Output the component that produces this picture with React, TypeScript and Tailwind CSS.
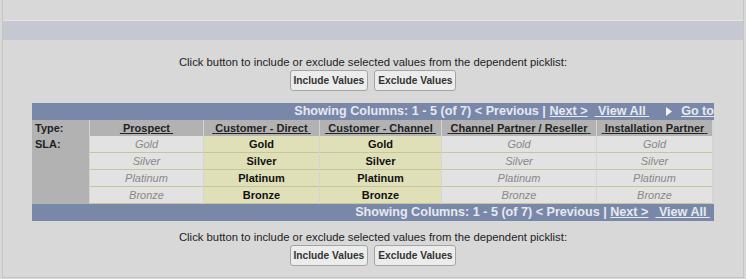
const COLUMNS = [
  { name: "Prospect", on: false },
  { name: "Customer - Direct", on: true },
  { name: "Customer - Channel", on: true },
  { name: "Channel Partner / Reseller", on: false },
  { name: "Installation Partner", on: false },
];
const VALUES = ["Gold", "Silver", "Platinum", "Bronze"];

function Buttons() {
  return (
    <div className="flex flex-col items-center">
      <p className="text-[11.3px] leading-[13px] text-[#222]">
        Click button to include or exclude selected values from the dependent picklist:
      </p>
      <div className="mt-[1px] flex gap-[6px]">
        <button className="h-[21px] rounded-[3px] border border-[#a4a4a4] bg-[#ececec] px-[3px] text-[10.2px] font-bold text-[#333]">
          Include Values
        </button>
        <button className="h-[21px] rounded-[3px] border border-[#a4a4a4] bg-[#ececec] px-[3px] text-[10.2px] font-bold text-[#333]">
          Exclude Values
        </button>
      </div>
    </div>
  );
}

function Pager({ goTo }: { goTo?: boolean }) {
  return (
    <div className="flex h-[17px] items-center justify-end whitespace-pre bg-[#7988a8] text-[12.6px] font-bold text-[#e6e9f0]">
      <span>Showing Columns: 1 - 5 (of 7) &lt; Previous | </span>
      <span className="underline">Next &gt;</span>
      <span>  </span>
      <span className="underline"> View All </span>
      {goTo ? (
        <>
          <span className="w-[17px]" />
          <svg width="6" height="9" viewBox="0 0 6 9" className="mr-[9px]">
            <path d="M0 0 L6 4.5 L0 9 Z" fill="#f4f4f4" />
          </svg>
          <span className="underline">Go to</span>
        </>
      ) : (
        <span className="w-[4px]" />
      )}
    </div>
  );
}

export default function App() {
  return (
    <div
      className="h-[279px] w-[746px] bg-[#d8d8d8]"
      style={{ fontFamily: '"Liberation Sans", Arial, sans-serif' }}
    >
      <div className="ml-[2px] mr-[2px] flex h-[278px] flex-col border-x border-b border-[#c4c4c4]">
        <div className="mt-[20px] h-px bg-[#e4e4e4]" />
        <div className="h-[19px] bg-[#c5c8d0]" />

        <div className="mt-[16px]">
          <Buttons />
        </div>

        <div className="mx-[29px] mt-[12px]">
          <Pager goTo />
          <div className="grid grid-cols-[57px_113px_115px_121px_154px_115px] gap-x-px bg-[#d4d4d4]">
            <div className="h-[16px] bg-[#b2b2b2] pl-[3px] text-[11px] font-bold leading-[16px] text-[#222]">
              Type:
            </div>
            {COLUMNS.map((c) => (
              <div
                key={c.name}
                className="h-[16px] bg-[#b2b2b2] text-center text-[11px] font-bold leading-[16px] text-[#222]"
              >
                <span className="whitespace-pre underline"> {c.name} </span>
              </div>
            ))}
            <div className="row-span-4 bg-[#b2b2b2] pl-[3px] text-[11px] font-bold leading-[16px] text-[#222]">
              SLA:
            </div>
            {VALUES.map((v) =>
              COLUMNS.map((c) => (
                <div
                  key={v + c.name}
                  className={
                    c.on
                      ? "h-[17px] border-b border-[#c9c59a] bg-[#e0e0b8] text-center text-[11px] font-bold leading-[16px] text-[#111]"
                      : "h-[17px] border-b border-[#c9c59a] bg-[#e2e2e2] text-center text-[11px] italic leading-[16px] text-[#888]"
                  }
                >
                  {v}
                </div>
              ))
            )}
          </div>
          <div className="h-[18px]">
            <Pager />
          </div>
        </div>

        <div className="mt-[9px]">
          <Buttons />
        </div>
      </div>
    </div>
  );
}
